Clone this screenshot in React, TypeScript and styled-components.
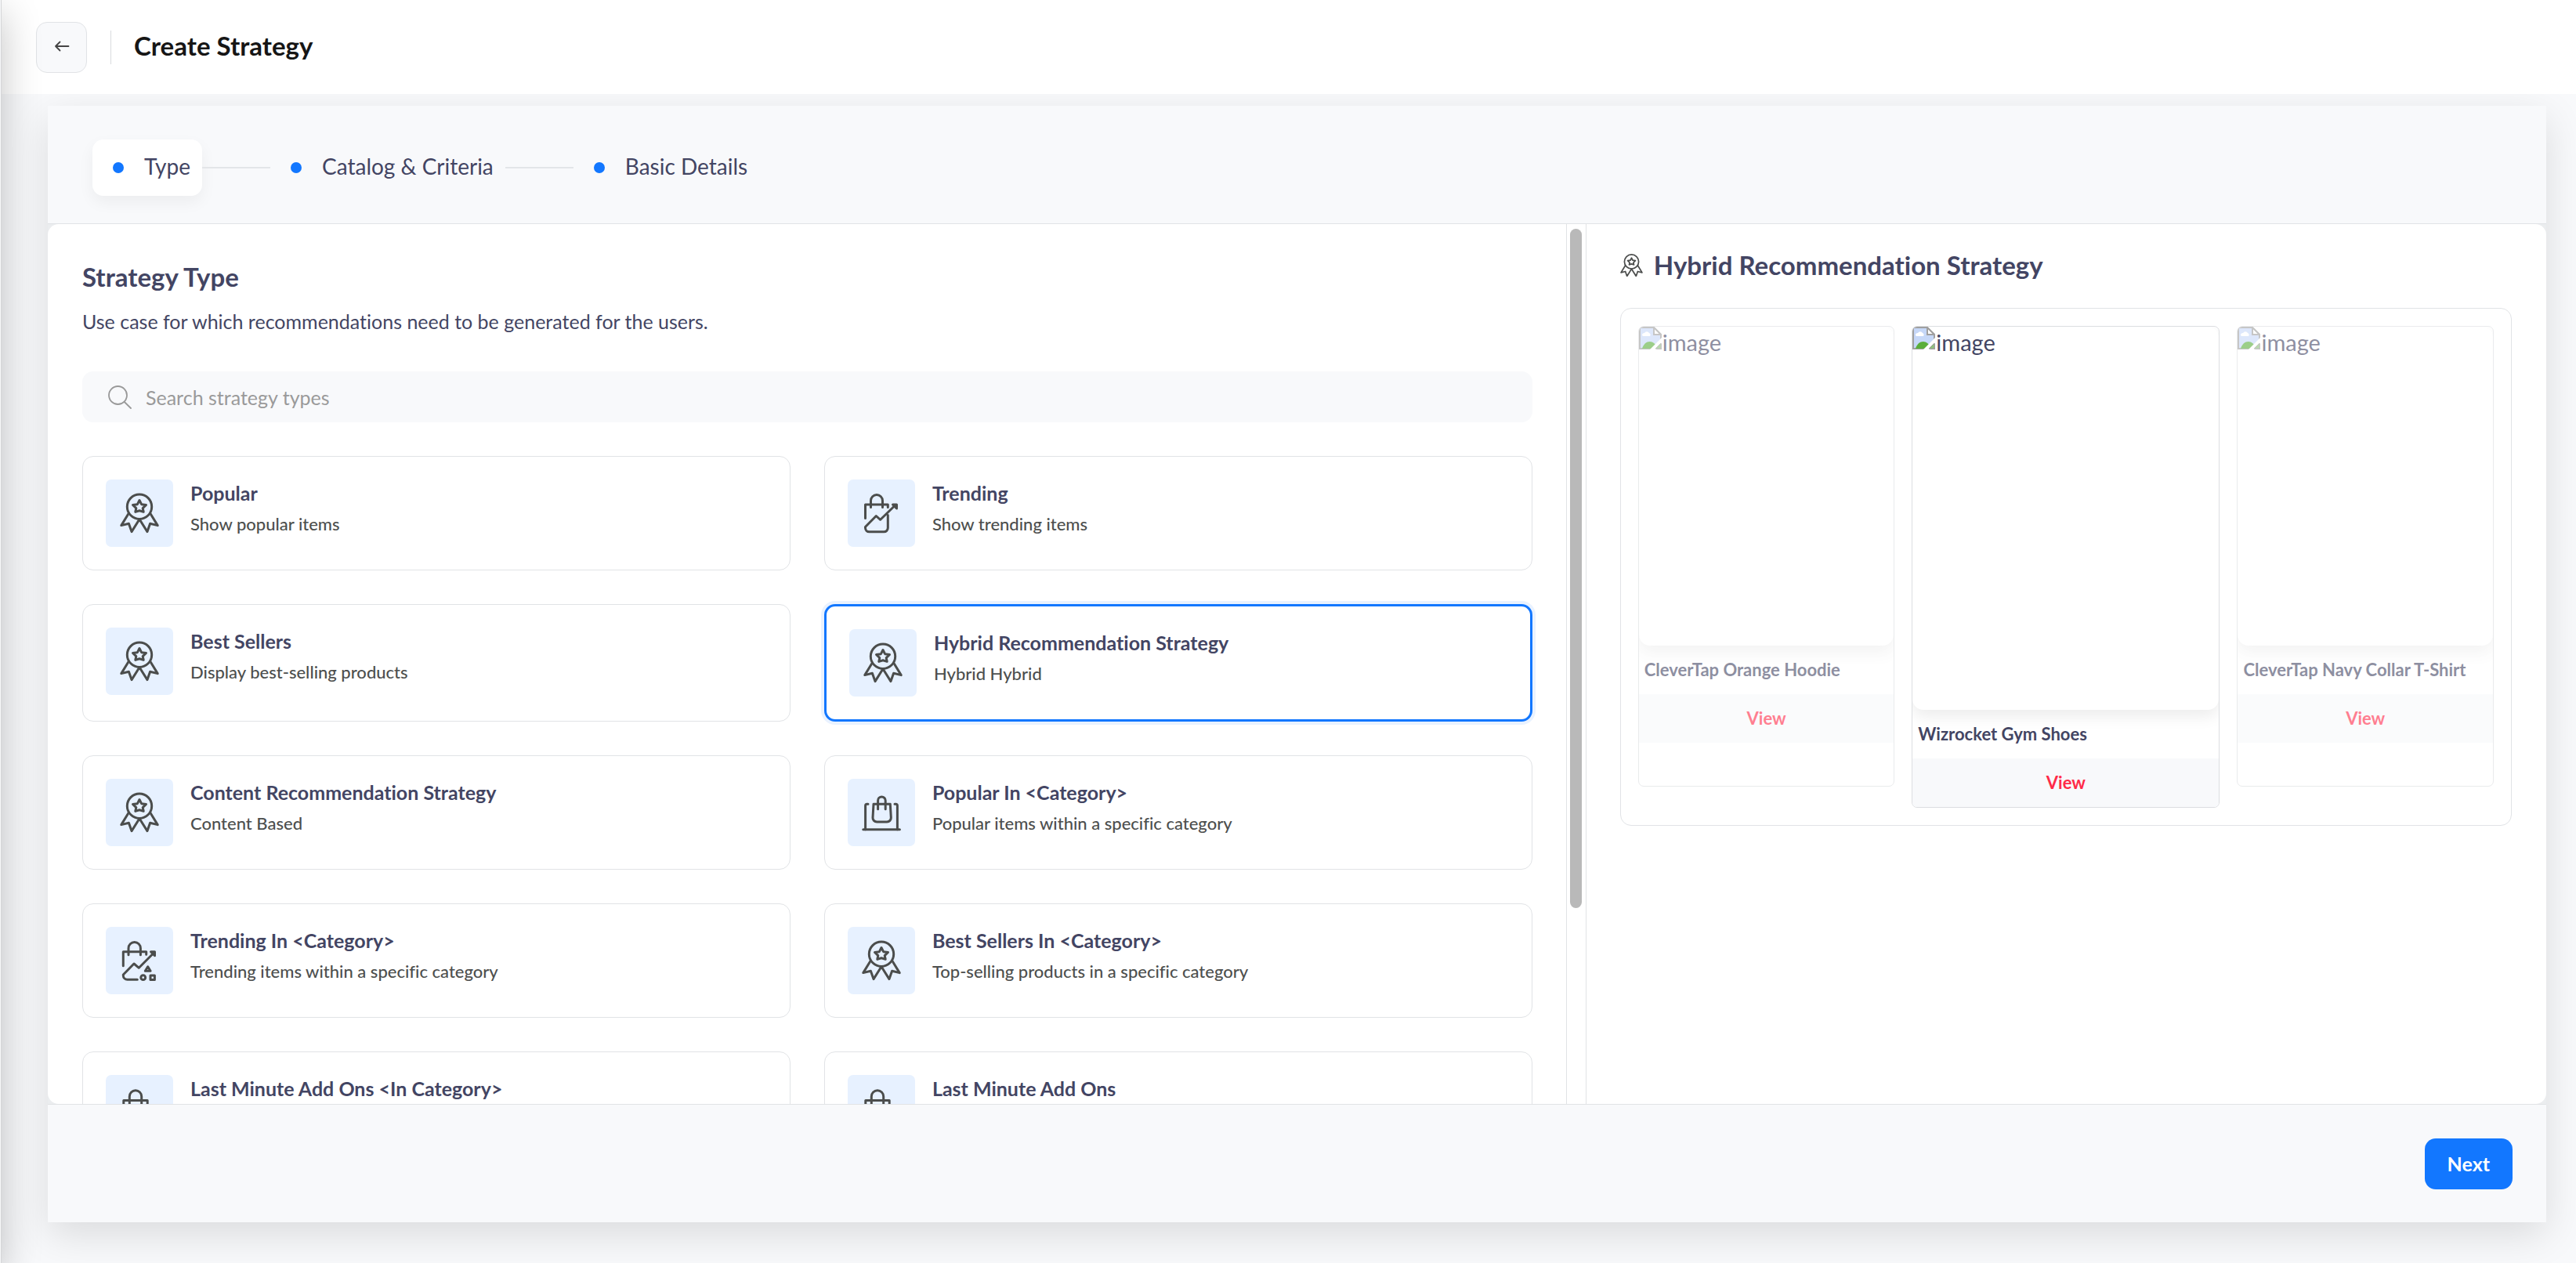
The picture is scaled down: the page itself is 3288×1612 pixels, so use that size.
import React, { useState } from "react";
import styled, { createGlobalStyle } from "styled-components";

const ink = "#434563";
const line = "#e1e3e6";
const mist = "#f8f9fb";
const blue = "#1277ff";

const GlobalStyle = createGlobalStyle`
  *, *::before, *::after { box-sizing: border-box; }
  body {
    margin: 0;
    background: ${mist};
    color: ${ink};
    font-family: Lato, "Open Sans", sans-serif;
    font-variant-ligatures: none;
    overflow: hidden;
  }
  h1, h2, p { margin: 0; }
  button, input { font: inherit; font-variant-ligatures: none; color: inherit; }
`;

const Page = styled.div`
  display: flex;
  flex-direction: column;
  height: 100vh;
`;

const SidebarEdge = styled.div`
  position: fixed;
  top: 0;
  bottom: 0;
  left: -200px;
  width: 202px;
  z-index: 3;
  background: #f7f8f9;
  border-right: 1px solid #d5d6d8;
  box-shadow: 0 16px 48px rgba(0, 0, 0, 0.24);
  pointer-events: none;
`;

const TopBar = styled.header`
  position: relative;
  z-index: 2;
  display: flex;
  flex: none;
  align-items: center;
  height: 120px;
  padding: 0 46px;
  background: #fff;
`;

const BackButton = styled.button`
  display: grid;
  place-items: center;
  width: 65px;
  height: 65px;
  padding: 0;
  border: 1px solid ${line};
  border-radius: 14px;
  background: ${mist};
  cursor: pointer;
`;

const Divider = styled.span`
  width: 1px;
  height: 43px;
  margin: 0 29px 0 30px;
  background: #d9dbde;
`;

const PageTitle = styled.h1`
  padding-bottom: 4px;
  color: #161616;
  font-size: 33px;
  line-height: 40px;
  font-weight: 700;
`;

const Main = styled.main`
  display: flex;
  flex: 1;
  min-height: 0;
  padding: 15px 38px 52px 61px;
`;

const Panel = styled.section`
  display: flex;
  flex: 1;
  flex-direction: column;
  min-width: 0;
  background: #ebedef;
  box-shadow: 0 16px 48px rgba(0, 0, 0, 0.12);
`;

const Steps = styled.nav`
  display: flex;
  flex: none;
  align-items: center;
  height: 151px;
  padding: 8px 57px 0;
  background: ${mist};
  border-bottom: 1px solid ${line};
`;

const Step = styled.a<{ $active?: boolean }>`
  display: flex;
  align-items: center;
  gap: 26px;
  height: 72px;
  padding: 0 15px 0 26px;
  border-radius: 14px;
  color: ${ink};
  font-size: 28px;
  line-height: 36px;
  text-decoration: none;
  background: ${(p) => (p.$active ? "#fff" : "transparent")};
  box-shadow: ${(p) => (p.$active ? "0 8px 20px rgba(0, 0, 0, 0.05)" : "none")};
`;

const StepLabel = styled.span`
  padding-bottom: 4px;
`;

const Dot = styled.span`
  width: 14px;
  height: 14px;
  border-radius: 50%;
  background: ${blue};
`;

const Connector = styled.span`
  width: 87px;
  height: 2px;
  background: #e3e5e8;
`;

const Content = styled.div`
  display: flex;
  flex: 1;
  min-height: 0;
  border-radius: 14px;
  background: #fff;
  overflow: hidden;
`;

const TypePane = styled.div`
  flex: 1;
  min-width: 0;
  padding: 47px 43px 40px 44px;
  overflow-y: auto;
  scrollbar-width: none;
`;

const ScrollTrack = styled.div`
  flex: none;
  width: 26px;
  padding: 6px 5px 6px 4px;
  border-left: 1px solid ${line};
  border-right: 1px solid ${line};
`;

const ScrollThumb = styled.div`
  height: 78%;
  border-radius: 8px;
  background: #b9b9b9;
`;

const SectionTitle = styled.h2`
  font-size: 33px;
  line-height: 40px;
  font-weight: 700;
`;

const Lead = styled.p`
  margin-top: 21px;
  font-size: 25px;
  line-height: 32px;
`;

const SearchBox = styled.label`
  display: flex;
  align-items: center;
  gap: 18px;
  height: 65px;
  margin: 48px 0 43px;
  padding: 0 33px;
  border-radius: 14px;
  background: ${mist};
`;

const SearchInput = styled.input`
  flex: 1;
  min-width: 0;
  padding: 0;
  border: 0;
  outline: 0;
  background: transparent;
  font-size: 25px;
  line-height: 32px;
  &::placeholder { color: #9a9a9a; opacity: 1; }
`;

const CardGrid = styled.div`
  display: grid;
  grid-template-columns: 1fr 1fr;
  gap: 43px;
`;

const Card = styled.button<{ $selected: boolean }>`
  display: flex;
  align-items: flex-start;
  gap: 22px;
  padding: 29px;
  border: ${(p) => (p.$selected ? `3px solid ${blue}` : `1px solid ${line}`)};
  border-radius: 14px;
  background: #fff;
  box-shadow: ${(p) => (p.$selected ? "0 0 0 4px #e9f2ff" : "none")};
  text-align: left;
  cursor: pointer;
`;

const Tile = styled.span`
  flex: none;
  width: 86px;
  height: 86px;
  border-radius: 7px;
  background: #e7f1ff;
  svg { display: block; }
`;

const CardText = styled.span`
  display: flex;
  flex-direction: column;
  gap: 10px;
  padding-top: 1px;
`;

const CardTitle = styled.span`
  font-size: 25px;
  line-height: 32px;
  font-weight: 700;
`;

const CardNote = styled.span`
  color: #4d4f4e;
  font-size: 22px;
  line-height: 28px;
  font-weight: 500;
`;

const PreviewPane = styled.aside`
  flex: none;
  width: 38.42%;
  padding: 32px 44px 32px 43px;
`;

const PreviewHeading = styled.div`
  display: flex;
  align-items: center;
  gap: 14px;
  margin-bottom: 35px;
`;

const PreviewBox = styled.div`
  display: grid;
  grid-template-columns: 10fr 12fr 10fr;
  align-items: start;
  gap: 22px;
  padding: 22px;
  border: 1px solid ${line};
  border-radius: 14px;
`;

const Product = styled.article<{ $muted: boolean }>`
  min-height: 588px;
  border: 1px solid #dcdee1;
  border-radius: 7px;
  overflow: hidden;
  opacity: ${(p) => (p.$muted ? 0.6 : 1)};
`;

const Picture = styled.div`
  display: flex;
  align-items: flex-start;
  gap: 1px;
  aspect-ratio: 4 / 5;
  border-radius: 14px;
  background: #fff;
  box-shadow: 0 8px 20px rgba(0, 0, 0, 0.08);
  font-size: 29px;
  line-height: 40px;
`;

const ProductName = styled.p`
  padding: 17px 7px;
  font-size: 22px;
  line-height: 28px;
  font-weight: 700;
`;

const ViewButton = styled.button`
  display: block;
  width: 100%;
  height: 62px;
  padding: 0;
  border: 0;
  background: ${mist};
  color: #ff2a48;
  font-size: 22px;
  font-weight: 700;
  cursor: pointer;
`;

const Footer = styled.footer`
  display: flex;
  flex: none;
  align-items: center;
  justify-content: flex-end;
  height: 151px;
  padding: 0 43px;
  background: ${mist};
  border-top: 1px solid ${line};
`;

const NextButton = styled.button`
  height: 65px;
  padding: 0 29px;
  border: 0;
  border-radius: 14px;
  background: ${blue};
  color: #fff;
  font-size: 25px;
  font-weight: 700;
  cursor: pointer;
`;

type Glyph = "ribbon" | "trend" | "trendCategory" | "store" | "bag";

function GlyphShapes({ name }: { name: Glyph }) {
  switch (name) {
    case "ribbon":
      return (
        <>
          <circle cx="43" cy="34.7" r="15.7" />
          <path d="M43 26.5l2.6 5.2 5.9.8-4.3 4.1 1 4.8-5.2-1.6-5.2 1.6 1-4.8-4.3-4.1 5.9-.8z" />
          <path d="M28.9 43.8L19.8 58.6l9.6-2.3L33 66.6l10-15.8 10 15.8 3.6-10.3 9.6 2.3-9.1-14.8" />
        </>
      );
    case "trend":
      return (
        <>
          <path d="M29.5 35.5V27a7.5 7.5 0 0 1 15 0v8.5" />
          <path d="M22.5 49.5V32h28.8v3.4" />
          <path d="M51.3 45.5v16.3a5 5 0 0 1-5 5H27.5a5 5 0 0 1-5-5v-1.3l13.8-14 5.4 4.8L60.5 33" />
          <path d="M57.5 32h5v5z" fill="currentColor" />
        </>
      );
    case "trendCategory":
      return (
        <>
          <path d="M29 35.7v-8.5a7.7 7.7 0 0 1 15.4 0v8.5" />
          <path d="M22.3 49.7v-18h29.4v3.6" />
          <path d="M40.3 67.3H27.6a5.3 5.3 0 0 1-5.3-5.3v-1L36 47l6.3 5.3L61 33.5" />
          <path d="M57.5 31.7h5v5z" fill="currentColor" />
          <path d="M53.7 50.8l3.4 5.4h-6.8z" />
          <circle cx="47.7" cy="64.7" r="2.9" />
          <path d="M57 62h5.4v5.4H57z" />
        </>
      );
    case "store":
      return (
        <>
          <path d="M19.8 64.7h46.6" />
          <path d="M26 32.3h-1.4a2 2 0 0 0-2 2v30.4" />
          <path d="M60 32.3h1.4a2 2 0 0 1 2 2v30.4" />
          <path d="M33 32.3h21.3l1 17.2a5.2 5.2 0 0 1-5.2 5.5H37.2a5.2 5.2 0 0 1-5.2-5.5z" />
          <path d="M38.6 38.8v-11a4.8 4.8 0 0 1 9.6 0v11" />
        </>
      );
    case "bag":
      return (
        <>
          <path d="M30.3 38V27.5a7.7 7.7 0 0 1 15.4 0V38" />
          <path d="M22.8 32.6h30.4v28.7a5.3 5.3 0 0 1-5.3 5.3H28.1a5.3 5.3 0 0 1-5.3-5.3z" />
        </>
      );
  }
}

function GlyphIcon({ name, size = 86, crop = false }: { name: Glyph; size?: number; crop?: boolean }) {
  return (
    <svg
      width={size}
      height={size}
      viewBox={crop ? "18 17.5 50 50" : "0 0 86 86"}
      fill="none"
      color="#4b4d4c"
      stroke="currentColor"
      strokeWidth="3"
      strokeLinecap="round"
      strokeLinejoin="round"
      aria-hidden="true"
    >
      <GlyphShapes name={name} />
    </svg>
  );
}

function BrokenPicture() {
  return (
    <svg width="29" height="30" viewBox="0 0 29 30" aria-hidden="true">
      <path d="M1 1h18l9 9v18H1z" fill="#c6d8f8" stroke="#a0a0a0" strokeWidth="2" />
      <path d="M4 11a3 3 0 0 1 3-3 3.5 3.5 0 0 1 6 0 2.5 2.5 0 0 1 1 4H5z" fill="#fff" />
      <path d="M4 28c3-11 15-13 20 0z" fill="#5aae3b" />
      <path d="M19 1v9h9z" fill="#fff" stroke="#a0a0a0" strokeWidth="2" />
      <path d="M13 30L29 14v7l-8 9z" fill="#fff" />
      <path d="M21 28h7v-7z" fill="#8dc27a" stroke="#a0a0a0" strokeWidth="1" />
    </svg>
  );
}

const strategies: { title: string; note: string; icon: Glyph }[] = [
  { title: "Popular", note: "Show popular items", icon: "ribbon" },
  { title: "Trending", note: "Show trending items", icon: "trend" },
  { title: "Best Sellers", note: "Display best-selling products", icon: "ribbon" },
  { title: "Hybrid Recommendation Strategy", note: "Hybrid Hybrid", icon: "ribbon" },
  { title: "Content Recommendation Strategy", note: "Content Based", icon: "ribbon" },
  { title: "Popular In <Category>", note: "Popular items within a specific category", icon: "store" },
  { title: "Trending In <Category>", note: "Trending items within a specific category", icon: "trendCategory" },
  { title: "Best Sellers In <Category>", note: "Top-selling products in a specific category", icon: "ribbon" },
  { title: "Last Minute Add Ons <In Category>", note: "", icon: "bag" },
  { title: "Last Minute Add Ons", note: "", icon: "bag" },
];

const products = ["CleverTap Orange Hoodie", "Wizrocket Gym Shoes", "CleverTap Navy Collar T-Shirt"];
const steps = ["Type", "Catalog & Criteria", "Basic Details"];

export default function App() {
  const [selected, setSelected] = useState(3);
  const [query, setQuery] = useState("");
  const current = strategies[selected];

  return (
    <Page>
      <GlobalStyle />
      <SidebarEdge />
      <TopBar>
        <BackButton aria-label="Back">
          <svg width="20" height="16" viewBox="0 0 20 16" fill="none" stroke="#444" strokeWidth="1.8" strokeLinecap="round" strokeLinejoin="round">
            <path d="M18.5 7H2M7.5 1.5L2 7l5.5 5.5" />
          </svg>
        </BackButton>
        <Divider />
        <PageTitle>Create Strategy</PageTitle>
      </TopBar>
      <Main>
        <Panel>
          <Steps aria-label="Steps">
            {steps.map((label, i) => (
              <React.Fragment key={label}>
                {i > 0 && <Connector />}
                <Step href={`#step-${i + 1}`} $active={i === 0}>
                  <Dot />
                  <StepLabel>{label}</StepLabel>
                </Step>
              </React.Fragment>
            ))}
          </Steps>
          <Content>
            <TypePane>
              <SectionTitle>Strategy Type</SectionTitle>
              <Lead>Use case for which recommendations need to be generated for the users.</Lead>
              <SearchBox>
                <svg width="30" height="30" viewBox="0 0 30 30" fill="none" stroke="#999" strokeWidth="1.8" strokeLinecap="round" aria-hidden="true">
                  <circle cx="12.5" cy="12.5" r="11.5" />
                  <path d="M20.8 21l8.2 8" />
                </svg>
                <SearchInput
                  type="text"
                  aria-label="Search strategy types"
                  placeholder="Search strategy types"
                  value={query}
                  onChange={(e) => setQuery(e.target.value)}
                />
              </SearchBox>
              <CardGrid>
                {strategies.map((s, i) => (
                  <Card key={s.title} $selected={i === selected} aria-pressed={i === selected} onClick={() => setSelected(i)}>
                    <Tile>
                      <GlyphIcon name={s.icon} />
                    </Tile>
                    <CardText>
                      <CardTitle>{s.title}</CardTitle>
                      <CardNote>{s.note}</CardNote>
                    </CardText>
                  </Card>
                ))}
              </CardGrid>
            </TypePane>
            <ScrollTrack>
              <ScrollThumb />
            </ScrollTrack>
            <PreviewPane>
              <PreviewHeading>
                <GlyphIcon name={current.icon} size={29} crop />
                <SectionTitle>{current.title}</SectionTitle>
              </PreviewHeading>
              <PreviewBox>
                {products.map((name, i) => (
                  <Product key={name} $muted={i !== 1}>
                    <Picture>
                      <BrokenPicture />
                      image
                    </Picture>
                    <ProductName>{name}</ProductName>
                    <ViewButton>View</ViewButton>
                  </Product>
                ))}
              </PreviewBox>
            </PreviewPane>
          </Content>
          <Footer>
            <NextButton>Next</NextButton>
          </Footer>
        </Panel>
      </Main>
    </Page>
  );
}
